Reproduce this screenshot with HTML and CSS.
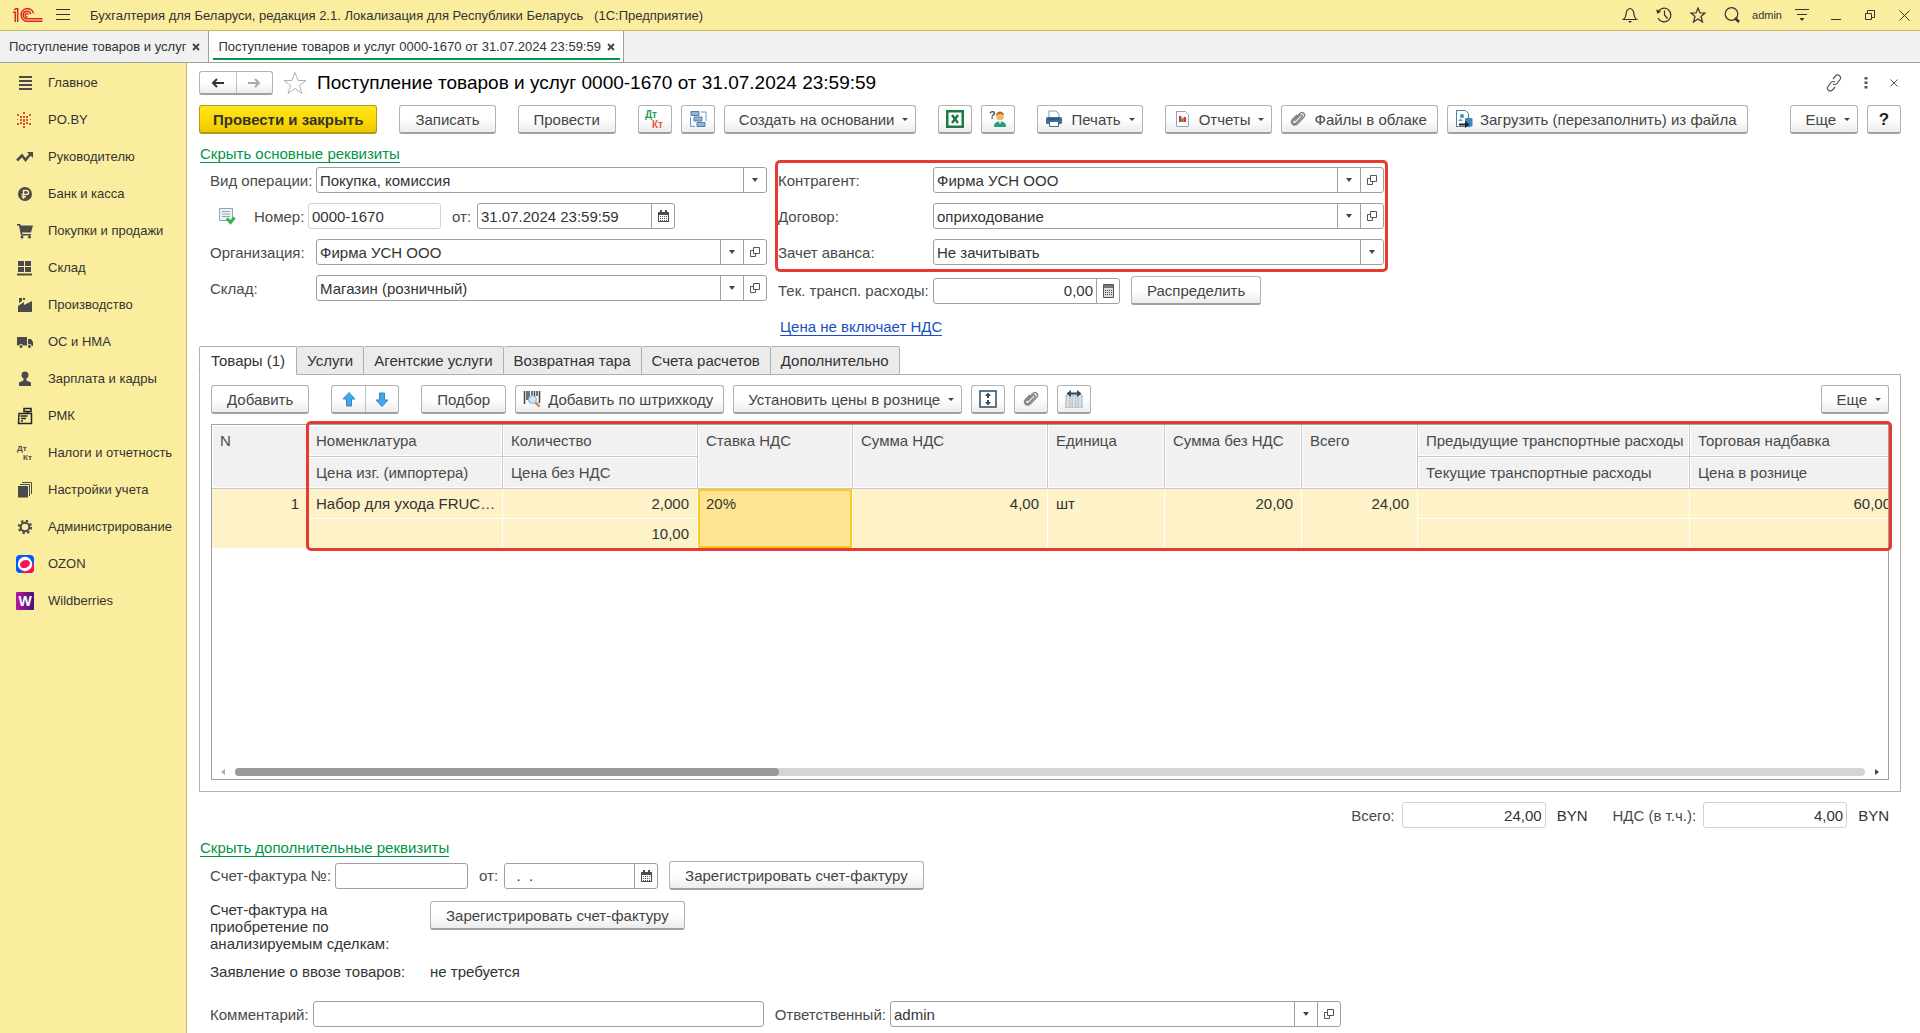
FILE: index.html
```html
<!DOCTYPE html>
<html lang="ru">
<head>
<meta charset="utf-8">
<title>Поступление товаров и услуг 0000-1670</title>
<link rel="stylesheet" href="styles.css">
</head>
<body>
<svg class="sprite" aria-hidden="true">
  <symbol id="open" viewBox="0 0 12 12"><path d="M4.500 1.500h6v6h-6zM4.500 4.500h-3v6h5v-3" fill="none" stroke="#555"/></symbol>
  <symbol id="calendar" viewBox="0 0 11 12"><path d="M0 2h11v10H0z" fill="#4c4c4c"/><path d="M2 0h2v3H2zM7 0h2v3H7z" fill="#4c4c4c"/><path d="M1 5h9v6H1z" fill="#fff"/><path d="M2 6.500h7M2 8.500h7M2 10.500h7" stroke="#555" stroke-dasharray="1 1"/></symbol>
  <symbol id="clip" viewBox="0 0 18 18"><path d="M5.500 11L11 5.500c1.300-1.300 3 .3 1.800 1.600L7 13c-2 2-4.800-.6-2.800-2.700L11 3.500c2.600-2.500 6.300 1 3.800 3.700L8.500 13.700c-3.500 3.300-8-.8-4.800-4.400L8 5" fill="none" stroke="#888" stroke-width="1.500"/></symbol>
</svg>

<header class="titlebar">
  <svg class="logo" width="30" height="15" viewBox="0 0 30 15"><g fill="none" stroke="#d9281e" stroke-width="1.500"><path d="M0 4.200h2.300V14M1 1.800L3 .8h1.700V14"/><path d="M20.500 5.400A6.300 6.300 0 1 0 14 13.300h15.500M17.700 6.200A3.800 3.800 0 1 0 14 10.800h15.500"/><path d="M15.500 6.500a1.700 1.700 0 1 0-1 2.300"/></g></svg>
  <button class="bare" aria-label="Меню"><svg width="14" height="12" viewBox="0 0 14 12"><path d="M0 .5h14M0 5.500h14M0 10.500h14" stroke="#333" fill="none"/></svg></button>
  <span class="app-name">Бухгалтерия для Беларуси, редакция 2.1. Локализация для Республики Беларусь &nbsp; (1С:Предприятие)</span>
  <div class="title-tools">
    <button class="bare" aria-label="Уведомления"><svg width="16" height="16" viewBox="0 0 16 16"><path d="M1.500 12.500h13c-2-1.500-2.500-3-2.700-6C11.700 3.500 10 2 8 1.500 6 2 4.300 3.500 4.200 6.500c-.2 3-.7 4.500-2.700 6z" fill="none" stroke="#333" stroke-width="1.200"/><path d="M6 14h4l-2 2z" fill="#333"/></svg></button>
    <button class="bare" aria-label="История"><svg width="16" height="16" viewBox="0 0 16 16"><path d="M2 5a6.800 6.800 0 1 1 0 6M8.500 3.500V8l3 3.500" fill="none" stroke="#333" stroke-width="1.200"/><path d="M0 2.500l5 2L1.500 7z" fill="#333"/></svg></button>
    <button class="bare" aria-label="Избранное"><svg width="16" height="16" viewBox="0 0 16 16"><path d="M8 1l2 5h5l-4 3.500 1.500 5.500L8 12l-4.500 3L5 9.500 1 6h5z" fill="none" stroke="#333" stroke-width="1.200"/></svg></button>
    <button class="bare" aria-label="Поиск"><svg width="16" height="16" viewBox="0 0 16 16"><circle cx="7.500" cy="7" r="6.300" fill="none" stroke="#333" stroke-width="1.200"/><path d="M11 11l4 4" stroke="#333" stroke-width="2.500"/></svg></button>
    <span class="user">admin</span>
    <button class="bare" aria-label="Настройки"><svg width="16" height="14" viewBox="0 0 16 14"><path d="M1 1.500h14M3 6.500h10" stroke="#333"/><path d="M5.500 10h5L8 13z" fill="#333"/></svg></button>
    <button class="bare win" aria-label="Свернуть"><svg width="10" height="12" viewBox="0 0 10 12"><path d="M0 10.500h10" stroke="#333"/></svg></button>
    <button class="bare win" aria-label="Восстановить"><svg width="10" height="10" viewBox="0 0 10 10"><path d="M.5 3.500h6v6h-6zM2.500 3V.5h7v7H7" fill="none" stroke="#333"/></svg></button>
    <button class="bare win" aria-label="Закрыть"><svg width="11" height="11" viewBox="0 0 11 11"><path d="M.5.5l10 10M10.500.5l-10 10" stroke="#333"/></svg></button>
  </div>
</header>

<nav class="windows">
  <div class="window-tab"><span>Поступление товаров и услуг</span><button class="bare" aria-label="Закрыть вкладку"><svg width="8" height="8" viewBox="0 0 8 8"><path d="M1 1l6 6M7 1L1 7" stroke="#444" stroke-width="1.800"/></svg></button></div>
  <div class="window-tab active"><span>Поступление товаров и услуг 0000-1670 от 31.07.2024 23:59:59</span><button class="bare" aria-label="Закрыть вкладку"><svg width="8" height="8" viewBox="0 0 8 8"><path d="M1 1l6 6M7 1L1 7" stroke="#444" stroke-width="1.800"/></svg></button></div>
</nav>

<div class="workspace">
  <nav class="sidebar">
    <a href="#"><svg viewBox="0 0 18 18"><path d="M3 3h13M3 7h13M3 11h13M3 15h13" stroke="#4a4a4a" stroke-width="2"/></svg>Главное</a>
    <a href="#"><svg viewBox="0 0 18 18"><path d="M7 1h2v2H7zM7 5h2v2H7zM7 8h2v3H7zM7 12h2v2H7zM7 15h2v2H7zM1 3h2v2H1zM4 5h2v2H4zM10 5h2v2h-2zM13 3h2v2h-2zM4 8h2v2H4zM10 8h2v2h-2zM1 8h1v1H1zM14 8h1v1h-1zM4 11h2v2H4zM10 11h2v2h-2zM1 12h2v2H1zM13 12h2v2h-2z" fill="#d8502c"/></svg>PO.BY</a>
    <a href="#"><svg viewBox="0 0 18 18"><path d="M1 12.500l5-5 3.500 4.500 5-6" stroke="#4a4a4a" stroke-width="2.500" fill="none"/><path d="M11 4h6v6z" fill="#4a4a4a"/></svg>Руководителю</a>
    <a href="#"><svg viewBox="0 0 18 18"><circle cx="9" cy="9" r="7" fill="#4a4a4a"/><path d="M7.500 14V5.500h3c2.800 0 2.800 4 0 4H5.500M5.500 11.700H10" stroke="#fbed9e" stroke-width="1.400" fill="none"/></svg>Банк и касса</a>
    <a href="#"><svg viewBox="0 0 18 18"><path d="M1 2h3l1 1.500h12L15 10.500H6L6.500 12H15v1.500H5L3 3.500H1z" fill="#4a4a4a"/><circle cx="6" cy="15" r="1.500" fill="#4a4a4a"/><circle cx="13.500" cy="15" r="1.500" fill="#4a4a4a"/></svg>Покупки и продажи</a>
    <a href="#"><svg viewBox="0 0 18 18"><path d="M2 2h6v5H2zM9 2h6v5H9zM2 8h6v5H2zM9 8h6v5H9zM1 14.500h15v2H1z" fill="#4a4a4a"/></svg>Склад</a>
    <a href="#"><svg viewBox="0 0 18 18"><path d="M2 16V10l6-4v3l8-4v11zM3 2h3v3L3 7zM7 2h2v2H7z" fill="#4a4a4a"/></svg>Производство</a>
    <a href="#"><svg viewBox="0 0 18 18"><path d="M1 4h10v8.500H1zM12 6h3l2 3v4h-5z" fill="#4a4a4a"/><circle cx="5" cy="13.500" r="2" fill="#4a4a4a" stroke="#fbed9e"/><circle cx="13.500" cy="13.500" r="2" fill="#4a4a4a" stroke="#fbed9e"/></svg>ОС и НМА</a>
    <a href="#"><svg viewBox="0 0 18 18"><circle cx="9" cy="5" r="3.500" fill="#4a4a4a"/><path d="M7.500 8h3v2.500l4.500 2V16H3v-3.500l4.500-2z" fill="#4a4a4a"/></svg>Зарплата и кадры</a>
    <a href="#"><svg viewBox="0 0 18 18"><path d="M3 6.500h12.500v10H2.500zM8 1.500h7v3H8zM11.500 4.500v2" fill="none" stroke="#222" stroke-width="1.500"/><path d="M4.500 9h7M5 11.500h5M5 14h2" stroke="#222" stroke-width="1.500"/></svg>РМК</a>
    <a href="#"><svg viewBox="0 0 18 18"><text x="1" y="7" class="mini">Дт</text><text x="7" y="16" class="mini">Кт</text></svg>Налоги и отчетность</a>
    <a href="#"><svg viewBox="0 0 18 18"><path d="M2 5h10v11.500H2z" fill="#4a4a4a"/><path d="M4 3.500h9.500V15M6 1.500h9.500V13" stroke="#4a4a4a" fill="none"/></svg>Настройки учета</a>
    <a href="#"><svg viewBox="0 0 18 18"><circle cx="9" cy="9" r="4.300" fill="none" stroke="#4a4a4a" stroke-width="2"/><circle cx="9" cy="9" r="6.200" fill="none" stroke="#4a4a4a" stroke-width="2" stroke-dasharray="2.400 2.470"/></svg>Администрирование</a>
    <a href="#"><svg viewBox="0 0 18 18"><rect width="18" height="18" rx="4" fill="#005bff"/><path d="M18 8v6a4 4 0 0 1-4 4H5z" fill="#f91155"/><circle cx="9" cy="9" r="7.200" fill="#fff"/><ellipse cx="9" cy="9" rx="5.200" ry="3.800" transform="rotate(-25 9 9)" fill="#f91155"/></svg>OZON</a>
    <a href="#"><svg viewBox="0 0 18 18"><defs><linearGradient id="wb"><stop stop-color="#b5179e"/><stop offset="1" stop-color="#481173"/></linearGradient></defs><rect width="18" height="18" rx="1" fill="url(#wb)"/><text x="9" y="14" text-anchor="middle" class="wb">W</text></svg>Wildberries</a>
  </nav>

  <main class="form">
    <div class="heading">
      <div class="pair nav-pair">
        <button aria-label="Назад"><svg width="14" height="10" viewBox="0 0 14 10"><path d="M13 5H3M6 1L2 5l4 4" stroke="#333" stroke-width="2" fill="none"/></svg></button>
        <button aria-label="Вперед"><svg width="14" height="10" viewBox="0 0 14 10"><path d="M1 5h10M8 1l4 4-4 4" stroke="#aaa" stroke-width="2" fill="none"/></svg></button>
      </div>
      <button class="bare" aria-label="В избранное"><svg width="24" height="24" viewBox="0 0 24 24"><path d="M12 1.500l3 8h8l-6.500 5L19 22.500l-7-5-7 5 2.500-8L1 9.500h8z" fill="#fff" stroke="#b0b0b0"/></svg></button>
      <h1>Поступление товаров и услуг 0000-1670 от 31.07.2024 23:59:59</h1>
      <div class="heading-tools">
        <button class="bare" aria-label="Ссылка"><svg width="16" height="18" viewBox="0 0 16 18"><path d="M7 5l2.500-3c2.500-2.500 6.500.5 4.500 3.500l-3 4c-1 1.300-3 1.300-4 .3M9 13l-2.500 3c-2.500 2.300-6.500-.5-4.500-3.500l3-4c1-1.300 3-1.300 4-.3" fill="none" stroke="#555" stroke-width="1.200"/></svg></button>
        <button class="bare" aria-label="Действия"><svg width="4" height="12" viewBox="0 0 4 12"><path d="M.5 0h3v2.500h-3zM.5 4.500h3V7h-3zM.5 9h3v2.500h-3z" fill="#555"/></svg></button>
        <button class="bare" aria-label="Закрыть"><svg width="8" height="8" viewBox="0 0 8 8"><path d="M.5.5l7 7M7.500.5l-7 7" stroke="#555"/></svg></button>
      </div>
    </div>

    <div class="toolbar commands">
      <button class="btn primary">Провести и закрыть</button>
      <button class="btn split">Записать</button>
      <button class="btn split">Провести</button>
      <button class="btn icon split" aria-label="Дт Кт"><svg width="20" height="20" viewBox="0 0 20 20"><text x="0" y="9" class="dt">Дт</text><text x="7" y="19" class="kt">Кт</text></svg></button>
      <button class="btn icon" aria-label="Структура подчиненности"><svg width="18" height="18" viewBox="0 0 18 18"><path d="M2 1.500h8v4H2zM5 7h8v4H5zM8 12.500h8v4H8z" fill="#8fb3d3" stroke="#4f81ab"/><path d="M12 2h5v9M1.500 7v9.500H6" fill="none" stroke="#6f9cc3"/></svg></button>
      <button class="btn menu">Создать на основании</button>
      <button class="btn icon split" aria-label="Excel"><svg width="18" height="18" viewBox="0 0 18 18"><path d="M1.250 1.250h15.500v15.500H1.250z" fill="#fff" stroke="#1d7a45" stroke-width="2.500"/><path d="M6 5l6 8M12 5l-6 8" stroke="#1d7a45" stroke-width="2.500"/></svg></button>
      <button class="btn icon" aria-label="Помощь специалиста"><svg width="18" height="18" viewBox="0 0 18 18"><text x="0" y="9" class="ask">?</text><path d="M5 17c0-4 2-5.500 6-5.500S17 13 17 17z" fill="#2b9c78"/><circle cx="11" cy="6.500" r="3.800" fill="#f0b860"/><path d="M7 5.500c0-5.500 8-5.500 8 0-2-2-6-2-8 0z" fill="#b56a28"/><path d="M9.500 11.500h3L11 14z" fill="#fff"/></svg></button>
      <button class="btn menu split pic"><svg width="18" height="18" viewBox="0 0 18 18"><path d="M5 1h6l3 3v4H4V1z" fill="#fff" stroke="#8899a8"/><rect x="1" y="7" width="16" height="7" rx="1.500" fill="#3f6d96"/><path d="M3 9h12" stroke="#274a6b"/><path d="M4.500 11.500h9v5h-9z" fill="#fff" stroke="#3f6d96"/></svg>Печать</button>
      <button class="btn menu split pic"><svg width="18" height="18" viewBox="0 0 18 18"><path d="M3.500 1.500h9l3 3v12h-12z" fill="#fafcff" stroke="#94a5b5"/><path d="M6 6h2.500v6H6z" fill="#e03030"/><path d="M8.500 8.500h2V12h-2z" fill="#2c9a48"/><path d="M10.500 7H13v5h-2.500z" fill="#e03030"/></svg>Отчеты</button>
      <button class="btn pic"><svg width="18" height="18"><use href="#clip"/></svg>Файлы в облаке</button>
      <button class="btn pic"><svg width="18" height="18" viewBox="0 0 18 18"><path d="M1.500.5h9l3 3v13h-12z" fill="#fff" stroke="#557a99"/><circle cx="7" cy="6" r="2" fill="#2b8fd0"/><path d="M3 11l2.500-2.500L8 11z" fill="#7f93a6"/><path d="M10 8.500c2-1 5-1 7.500 0V16c-2 1.500-5.500 1.500-7.500 0z" fill="#3b87c4"/><path d="M4 13.500h6V11l4.500 3.500L10 18v-2.500H4z" fill="#222"/></svg>Загрузить (перезаполнить) из файла</button>
      <button class="btn menu push">Еще</button>
      <button class="btn icon help">?</button>
    </div>

    <a class="toggle" href="#">Скрыть основные реквизиты</a>

    <div class="requisites">
      <div class="column">
        <div class="row"><label for="op">Вид операции:</label><div class="combo"><select id="op"><option>Покупка, комиссия</option></select></div></div>
        <div class="row number-row">
          <svg class="status" width="19" height="18" viewBox="0 0 19 18"><path d="M1.500 1.500h13v12h-13z" fill="#edf2f7" stroke="#8fa3b5"/><path d="M4 4.500h8M4 7h8M4 9.500h8" stroke="#8fa3b5"/><path d="M9 11.500l3.500 4 4-5" stroke="#35b24a" stroke-width="3" fill="none"/></svg>
          <label for="num">Номер:</label><div class="combo pale w-number"><input id="num" value="0000-1670"></div>
          <label for="date" class="from">от:</label><div class="combo w-datetime"><input id="date" value="31.07.2024 23:59:59"><button aria-label="Календарь"><svg width="11" height="12"><use href="#calendar"/></svg></button></div>
        </div>
        <div class="row"><label for="org">Организация:</label><div class="combo"><select id="org"><option>Фирма УСН ООО</option></select><button aria-label="Открыть"><svg width="12" height="12"><use href="#open"/></svg></button></div></div>
        <div class="row"><label for="store">Склад:</label><div class="combo"><select id="store"><option>Магазин (розничный)</option></select><button aria-label="Открыть"><svg width="12" height="12"><use href="#open"/></svg></button></div></div>
      </div>
      <div class="column partner">
        <div class="marked">
          <div class="row"><label for="agent">Контрагент:</label><div class="combo"><select id="agent"><option>Фирма УСН ООО</option></select><button aria-label="Открыть"><svg width="12" height="12"><use href="#open"/></svg></button></div></div>
          <div class="row"><label for="contract">Договор:</label><div class="combo"><select id="contract"><option>оприходование</option></select><button aria-label="Открыть"><svg width="12" height="12"><use href="#open"/></svg></button></div></div>
          <div class="row"><label for="advance">Зачет аванса:</label><div class="combo"><select id="advance"><option>Не зачитывать</option></select></div></div>
        </div>
        <div class="row tall"><label for="freight">Тек. трансп. расходы:</label><div class="combo w-amount"><input id="freight" class="num" value="0,00"><button aria-label="Калькулятор"><svg width="11" height="14" viewBox="0 0 11 14"><path d="M.5.5h10v13H.5z" fill="#ddd" stroke="#555"/><path d="M1 1h9v3H1z" fill="#777"/><path d="M2 6.500h7M2 8.500h7M2 10.500h7" stroke="#444" stroke-dasharray="1 1"/></svg></button></div><button class="btn">Распределить</button></div>
        <a class="price-link" href="#">Цена не включает НДС</a>
      </div>
    </div>

    <div class="tabs">
      <button class="current">Товары (1)</button><button>Услуги</button><button>Агентские услуги</button><button>Возвратная тара</button><button>Счета расчетов</button><button>Дополнительно</button>
    </div>
    <section class="panel">
      <div class="toolbar">
        <button class="btn">Добавить</button>
        <div class="pair split arrows">
          <button aria-label="Вверх"><svg width="14" height="15" viewBox="0 0 14 15"><path d="M7 .5l6 6.500H9.500v7h-5V7H1z" fill="#3fa9f0" stroke="#3b86b8"/></svg></button>
          <button aria-label="Вниз"><svg width="14" height="15" viewBox="0 0 14 15"><path d="M7 14.500L13 8H9.500V1h-5v7H1z" fill="#3fa9f0" stroke="#3b86b8"/></svg></button>
        </div>
        <button class="btn split">Подбор</button>
        <button class="btn pic"><svg width="18" height="18" viewBox="0 0 18 18"><path d="M1.500 1v13M4 1v9M6 1v9M9 1v5M11.500 1v5M14 1v5M16.500 1v12" stroke="#444" stroke-width="1.500"/><circle cx="9.500" cy="9.500" r="4" fill="#cfe5f7" stroke="#8aa6bd"/><path d="M12.500 12.500l4 4" stroke="#c9905a" stroke-width="2.500"/></svg>Добавить по штрихкоду</button>
        <button class="btn menu">Установить цены в рознице</button>
        <button class="btn icon" aria-label="Высота строк"><svg width="18" height="18" viewBox="0 0 18 18"><path d="M1 1h16v16H1z" fill="#fff" stroke="#2e4a63" stroke-width="1.500"/><path d="M9 4v4M9 10v4" stroke="#2e4a63" stroke-width="2"/><path d="M6 6l3-3.500L12 6zM6 12l3 3.500 3-3.500z" fill="#2e4a63"/></svg></button>
        <button class="btn icon" aria-label="Файлы"><svg width="18" height="18"><use href="#clip"/></svg></button>
        <button class="btn icon" aria-label="Ширина колонок"><svg width="18" height="18" viewBox="0 0 18 18"><path d="M1 5h4v13H1zM7 5h4v13H7zM13 5h4v13h-4z" fill="#dbe3e9" stroke="#9fadb8"/><path d="M3 3.500h12" stroke="#2e4a5b" stroke-width="2"/><path d="M6 0v7L1.500 3.500zM12 0v7l4.500-3.500z" fill="#2e4a5b"/></svg></button>
        <button class="btn menu push">Еще</button>
      </div>

      <div class="grid-frame">
        <div class="grid-view">
          <table>
            <colgroup><col class="c-n"><col class="c-item"><col class="c-qty"><col class="c-rate"><col class="c-vat"><col class="c-unit"><col class="c-net"><col class="c-total"><col class="c-freight"><col class="c-markup"></colgroup>
            <thead>
              <tr><th rowspan="2" class="plain">N</th><th>Номенклатура</th><th>Количество</th><th rowspan="2">Ставка НДС</th><th rowspan="2">Сумма НДС</th><th rowspan="2">Единица</th><th rowspan="2">Сумма без НДС</th><th rowspan="2">Всего</th><th>Предыдущие транспортные расходы</th><th>Торговая надбавка</th></tr>
              <tr><th>Цена изг. (импортера)</th><th>Цена без НДС</th><th>Текущие транспортные расходы</th><th>Цена в рознице</th></tr>
            </thead>
            <tbody>
              <tr><td rowspan="2" class="num plain">1</td><td>Набор для ухода FRUC…</td><td class="num">2,000</td><td rowspan="2" class="focus">20%</td><td rowspan="2" class="num">4,00</td><td rowspan="2">шт</td><td rowspan="2" class="num">20,00</td><td rowspan="2" class="num">24,00</td><td></td><td class="num">60,00</td></tr>
              <tr><td></td><td class="num">10,00</td><td></td><td></td></tr>
            </tbody>
          </table>
        </div>
        <div class="scroll"><i class="prev"></i><div class="track"><div class="thumb"></div></div><i class="next"></i></div>
        <div class="highlight"></div>
      </div>
    </section>

    <div class="totals">
      <label for="total">Всего:</label><div class="combo pale w-total"><input id="total" class="num" value="24,00"></div><span class="cur">BYN</span>
      <label for="vat" class="second">НДС (в т.ч.):</label><div class="combo pale w-total"><input id="vat" class="num" value="4,00"></div><span class="cur">BYN</span>
    </div>

    <a class="toggle" href="#">Скрыть дополнительные реквизиты</a>
    <div class="row tall inv"><label for="inv" class="auto">Счет-фактура №:</label><div class="combo w-number"><input id="inv"></div><label for="invdate" class="from">от:</label><div class="combo w-date"><input id="invdate" value=" &nbsp;.&nbsp; ."><button aria-label="Календарь"><svg width="11" height="12"><use href="#calendar"/></svg></button></div><button class="btn">Зарегистрировать счет-фактуру</button></div>
    <div class="facts">
      <span class="narrow">Счет-фактура на приобретение по анализируемым сделкам:</span><div><button class="btn">Зарегистрировать счет-фактуру</button></div>
      <span>Заявление о ввозе товаров:</span><span>не требуется</span>
    </div>
    <div class="row footer"><label for="comment" class="auto">Комментарий:</label><div class="combo w-long"><input id="comment"></div><label for="resp" class="auto">Ответственный:</label><div class="combo w-long"><select id="resp"><option>admin</option></select><button aria-label="Открыть"><svg width="12" height="12"><use href="#open"/></svg></button></div></div>
  </main>
</div>
</body>
</html>
```
FILE: styles.css
```css
* { box-sizing: border-box; }
body {
  margin: 0;
  min-height: 100vh;
  display: flex;
  flex-direction: column;
  background: #fff;
  color: #333;
  font: 15px/17px "Liberation Sans", Arial, sans-serif;
}
button, input, select { font: inherit; color: inherit; }
button { padding: 0; white-space: nowrap; }
svg { display: block; flex: none; }
.sprite { position: absolute; width: 0; height: 0; }
.bare { border: 0; background: none; display: flex; align-items: center; justify-content: center; }

/* Window title bar */
.titlebar {
  height: 31px;
  display: flex;
  align-items: center;
  padding: 0 8px 0 13px;
  background: #fbed9e;
  border-bottom: 1px solid #c8b568;
  font-size: 13px;
}
.titlebar .logo { margin-right: 13px; }
.app-name { margin-left: 20px; }
.title-tools { margin-left: auto; display: flex; align-items: center; gap: 18px; }
.user { font-size: 11px; margin: 0 -6px; }
.win { width: 16px; }

/* Open windows */
.windows { height: 32px; display: flex; background: #f1f1f1; border-bottom: 1px solid #a0a0a0; font-size: 13px; }
.window-tab { display: flex; align-items: center; gap: 6px; padding: 0 8px 0 9px; border-right: 1px solid #a0a0a0; }
.window-tab.active { background: linear-gradient(#009646, #009646) 4px 27px / calc(100% - 7px) 2px no-repeat #fff; }

.workspace { flex: 1; display: flex; }

/* Sections */
.sidebar { width: 187px; flex: none; padding-top: 1px; background: #fbed9e; border-right: 1px solid #c8b568; font-size: 13px; }
.sidebar a { height: 37px; display: flex; align-items: center; gap: 14px; padding-left: 16px; color: #333; text-decoration: none; white-space: nowrap; }
.sidebar svg { width: 18px; height: 18px; }
.mini { font: bold 8px "Liberation Sans", Arial, sans-serif; fill: #4a4a4a; }
.wb { font: bold 14px "Liberation Sans", Arial, sans-serif; fill: #fff; }
.dt { font: bold 10px "Liberation Sans", Arial, sans-serif; fill: #1f9d4d; }
.kt { font: bold 10px "Liberation Sans", Arial, sans-serif; fill: #ea5350; }
.ask { font: bold 11px "Liberation Sans", Arial, sans-serif; fill: #555; }

/* Document form */
.form { flex: 1; min-width: 0; display: flex; flex-direction: column; padding: 8px 19px 6px 12px; }
.heading { display: flex; align-items: center; height: 24px; gap: 10px; }
h1 { margin: 0; font-size: 19px; line-height: 24px; font-weight: normal; color: #000; white-space: nowrap; }
.heading-tools { margin-left: auto; display: flex; align-items: center; gap: 22px; padding-right: 3px; }

.btn, .pair {
  height: 29px;
  border: 1px solid #b3b3b3;
  border-bottom: 2px solid #a0a0a0;
  border-radius: 3px;
  background: linear-gradient(#fff 50%, #ececec);
  color: #444;
}
.btn { display: inline-flex; align-items: center; justify-content: center; padding: 0 15px; }
.btn.icon { width: 34px; padding: 0; }
.btn.menu { padding: 0 7px 0 14px; }
.btn.menu::after { content: ""; border: 3px solid transparent; border-top-color: #444; border-bottom: 0; margin-left: 8px; }
.btn.pic { padding: 0 10px 0 7px; gap: 7px; }
.btn.menu.pic { padding-right: 7px; gap: 8px; }
.btn.menu.pic::after { margin-left: 0; }
.btn.primary { padding: 0 13px; background: linear-gradient(#ffe51f, #f9d800 60%, #ecc800); border-color: #b09b1a; font-weight: bold; color: #333; }
.help { font-weight: bold; font-size: 17px; color: #222; }
.pair { display: flex; width: 68px; }
.pair button { flex: 1; border: 0; background: none; display: flex; align-items: center; justify-content: center; }
.pair button + button { border-left: 1px solid #c0c0c0; }
.nav-pair { width: 74px; height: 24px; }

.toolbar { display: flex; gap: 9px; }
.toolbar .split { margin-left: 13px; }
.toolbar .push { margin-left: auto; }
.commands { margin-top: 10px; }

.toggle, .price-link { align-self: flex-start; color: #009646; text-decoration: none; border-bottom: 1px solid; margin-left: 1px; line-height: 16px; }
.commands + .toggle { margin-top: 12px; }
.requisites { display: flex; gap: 11px; margin: 4px 0 0 11px; }
.column { width: 557px; display: flex; flex-direction: column; gap: 10px; }
.column.partner { width: 606px; gap: 11px; }
.row { display: flex; align-items: center; height: 26px; }
.row.tall { height: 29px; gap: 0; }
.row label { width: 106px; flex: none; color: #4a4a4a; white-space: nowrap; }
.row .btn { margin-left: 11px; }
.partner .row label { width: 155px; }
.number-row .status { margin: 0 17px 0 8px; }
.row.number-row label { width: 54px; }
.row .from, .row.number-row .from { width: 25px; margin-left: 11px; }
.row label.auto { width: auto; margin-right: 4px; }
.combo { flex: 1; min-width: 0; height: 26px; display: flex; border: 1px solid #a0a0a0; border-radius: 3px; background: #fff; }
.combo.pale { border-color: #d2d2d2; }
.combo input, .combo select { flex: 1; min-width: 0; width: 0; height: 24px; padding: 0 4px 0 3px; border: 0; background: none; outline: 0; appearance: none; border-radius: 2px; }
.combo select { background: url("data:image/svg+xml,%3Csvg xmlns='http://www.w3.org/2000/svg' width='23' height='24'%3E%3Cpath d='M.5 0v24' stroke='%23a0a0a0'/%3E%3Cpath d='M9 10h6l-3 4z' fill='%23444'/%3E%3C/svg%3E") right center no-repeat; }
.combo button { width: 23px; flex: none; border: 0; border-left: 1px solid #a0a0a0; background: none; display: flex; align-items: center; justify-content: center; }
.combo .num { text-align: right; padding-right: 3px; }
.combo.w-number, .combo.w-datetime, .combo.w-amount, .combo.w-total, .combo.w-date, .combo.w-long { flex: none; }
.w-number { width: 133px; }
.w-datetime { width: 198px; }
.w-amount { width: 187px; }
.w-total { width: 144px; }
.w-date { width: 154px; }
.w-long { width: 451px; }
.marked { position: relative; display: flex; flex-direction: column; gap: 10px; }
.marked::after, .highlight { content: ""; position: absolute; border: 3px solid #e83a30; border-radius: 5px; pointer-events: none; }
.marked::after { inset: -7px -4px -7px -3px; }
.partner .price-link { color: #1a4fc0; margin: 3px 0 0 2px; }

/* Tabs and goods table */
.tabs { display: flex; margin-top: 10px; }
.tabs button { height: 29px; padding: 0 10px; border: 1px solid #b0b0b0; border-left: 0; background: #ebebeb; border-radius: 2px 2px 0 0; }
.tabs .current { position: relative; z-index: 1; padding: 0 11px; border-left: 1px solid #b0b0b0; border-bottom-color: #fff; background: #fff; }
.panel { flex: 1; display: flex; flex-direction: column; margin-top: -1px; padding: 10px 11px 11px; border: 1px solid #b0b0b0; }
.grid-frame { position: relative; flex: 1; display: flex; flex-direction: column; margin-top: 10px; border: 1px solid #a0a0a0; }
.grid-view { flex: 1; min-width: 0; overflow: hidden; }
table { width: 1688px; table-layout: fixed; border-collapse: separate; border-spacing: 0; }
.c-n { width: 96px; } .c-item { width: 195px; } .c-qty { width: 195px; } .c-rate { width: 155px; } .c-vat { width: 195px; }
.c-unit { width: 117px; } .c-net { width: 137px; } .c-total { width: 116px; } .c-freight { width: 272px; } .c-markup { width: 210px; }
th, td { padding: 6px 2px 6px 8px; text-align: left; vertical-align: top; font-weight: normal; white-space: nowrap; line-height: 17px; overflow: hidden; }
th { height: 32px; padding-top: 7px; background: #f1f1f1; color: #4a4a4a; border-right: 1px solid #c8c8c8; border-bottom: 1px solid #c8c8c8; box-shadow: inset 0 0 0 1px #fff; }
td { height: 30px; background: #fdf2c8; border-right: 1px solid #fff; border-bottom: 1px solid #fff; }
th.plain { border-right-color: #f1f1f1; }
td.num { text-align: right; padding-right: 8px; }
td.focus { background: #ffe591; box-shadow: inset 0 0 0 2px #fbcb1f; }
.highlight { left: 94px; right: -4px; top: -4px; height: 130px; }
.scroll { height: 15px; display: flex; align-items: center; gap: 10px; padding: 0 9px; }
.scroll i { border: 3px solid transparent; border-left-width: 0; border-right: 4px solid #aaa; }
.scroll .next { border-right: 0; border-left: 4px solid #444; }
.track { flex: 1; height: 8px; border-radius: 4px; background: #d5d5d5; }
.thumb { width: 33.4%; height: 8px; border-radius: 4px; background: #999; }

.totals { display: flex; align-items: center; justify-content: flex-end; margin: 10px 12px 12px 0; }
.totals label { color: #4a4a4a; margin-right: 7px; }
.totals .cur { margin-left: 11px; }
.totals .second { margin-left: 25px; }
.inv { margin: 4px 0 11px 11px; }
.facts { display: grid; grid-template-columns: 220px auto; justify-content: start; row-gap: 11px; margin-left: 11px; }
.narrow { width: 190px; }
.footer { margin: 21px 0 0 11px; }
.footer .combo + label { margin-left: 11px; }
```
